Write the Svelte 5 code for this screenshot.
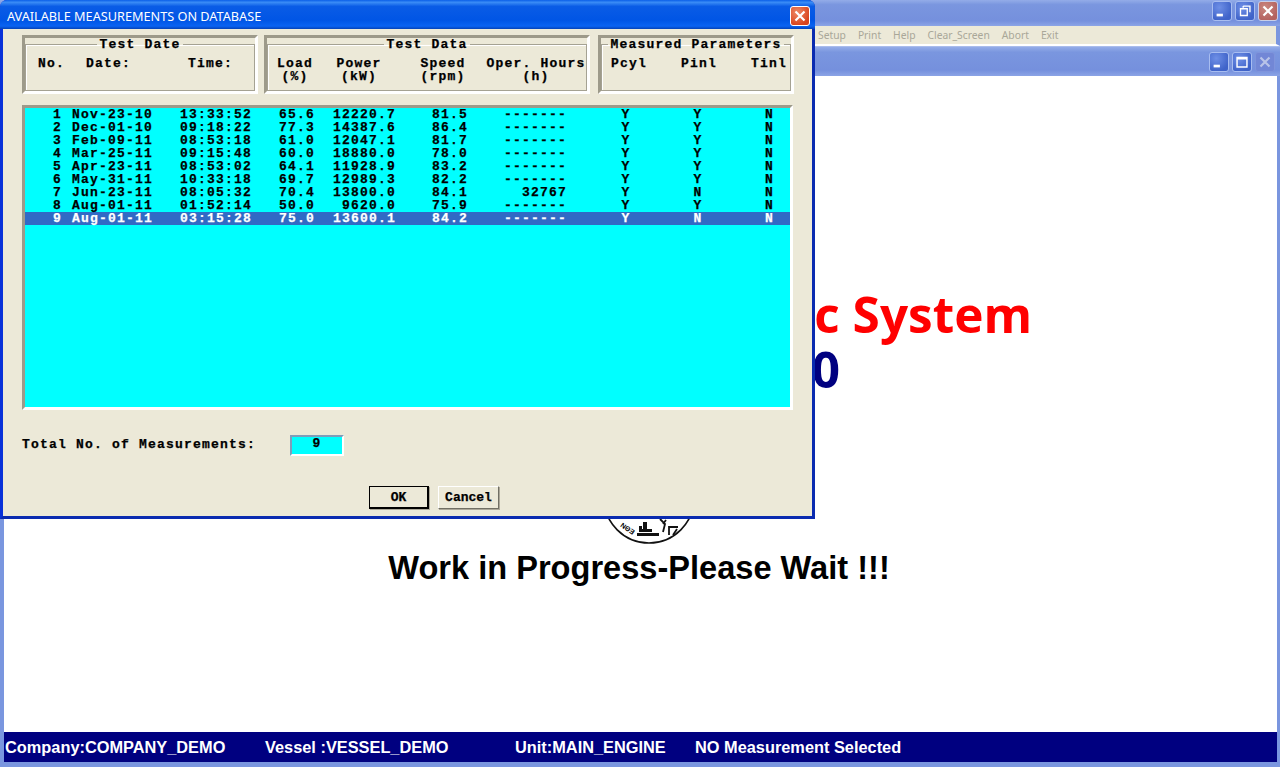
<script lang="ts">
    const rows = [
        ["1", "Nov-23-10", "13:33:52", "65.6", "12220.7", "81.5", "-------", "Y", "Y", "N"],
        ["2", "Dec-01-10", "09:18:22", "77.3", "14387.6", "86.4", "-------", "Y", "Y", "N"],
        ["3", "Feb-09-11", "08:53:18", "61.0", "12047.1", "81.7", "-------", "Y", "Y", "N"],
        ["4", "Mar-25-11", "09:15:48", "60.0", "18880.0", "78.0", "-------", "Y", "Y", "N"],
        ["5", "Apr-23-11", "08:53:02", "64.1", "11928.9", "83.2", "-------", "Y", "Y", "N"],
        ["6", "May-31-11", "10:33:18", "69.7", "12989.3", "82.2", "-------", "Y", "Y", "N"],
        ["7", "Jun-23-11", "08:05:32", "70.4", "13800.0", "84.1", "32767", "Y", "N", "N"],
        ["8", "Aug-01-11", "01:52:14", "50.0", "9620.0", "75.9", "-------", "Y", "Y", "N"],
        ["9", "Aug-01-11", "03:15:28", "75.0", "13600.1", "84.2", "-------", "Y", "N", "N"],
    ];
    const selected = 8;
    const menu = ["Setup", "Print", "Help", "Clear_Screen", "Abort", "Exit"];
</script>

<div class="desktop">
    <div class="app-title">
        <span class="win-btn"><svg viewBox="0 0 20 20"><rect x="4" y="13" width="7" height="3" fill="#fff" /></svg></span>
        <span class="win-btn"><svg viewBox="0 0 20 20"><path d="M8 4.5h7.5v7M8 4.5v2M5 7.5h7.5v7.5H5z" fill="none" stroke="#fff" stroke-width="1.5" /></svg></span>
        <span class="win-btn danger"><svg viewBox="0 0 20 20"><path d="M5 5l10 10M15 5L5 15" stroke="#fff" stroke-width="2.4" /></svg></span>
    </div>
    <nav class="menu">
        {#each menu as item}<span>{item}</span>{/each}
    </nav>
    <div class="child-title">
        <span class="win-btn"><svg viewBox="0 0 20 20"><rect x="4" y="13" width="7" height="3" fill="#fff" /></svg></span>
        <span class="win-btn"><svg viewBox="0 0 20 20"><path d="M4.5 5h11v10.5h-11z M4.5 6.5h11" fill="none" stroke="#fff" stroke-width="1.6" /></svg></span>
        <span class="win-btn muted"><svg viewBox="0 0 20 20"><path d="M5 5l10 10M15 5L5 15" stroke="#b9c4e8" stroke-width="2.4" /></svg></span>
    </div>

    <main class="client">
        <h1 class="product">Engine Diagnostic System</h1>
        <h2 class="version">Version 1.0</h2>
        <svg class="seal" viewBox="0 0 92 92" aria-hidden="true">
            <circle cx="46" cy="46" r="45" fill="#fff" stroke="#111" stroke-width="1.6" />
            <path d="M34 81h22v3H34zM36 77h13v3H36zM40 70h4v7h-4zM36 74h3v3h-3z" fill="#111" />
            <path d="M57 67l5 5-2 8M63 68l-3 4M66 83V75h9M70 83l4-6" fill="none" stroke="#111" stroke-width="1.8" />
            <text x="46" y="11" transform="rotate(215 46 46)" class="seal-text">ΕΘΝ</text>
        </svg>
        <h3 class="wait">Work in Progress-Please Wait !!!</h3>
    </main>

    <footer class="status">
        <span class="s-company">Company:COMPANY_DEMO</span>
        <span class="s-vessel">Vessel :VESSEL_DEMO</span>
        <span class="s-unit">Unit:MAIN_ENGINE</span>
        <span>NO Measurement Selected</span>
    </footer>

    <section class="dialog">
        <header class="dialog-title">
            <span>AVAILABLE MEASUREMENTS ON DATABASE</span>
            <span class="win-btn close"><svg viewBox="0 0 20 20"><path d="M5 5l10 10M15 5L5 15" stroke="#fff" stroke-width="2.4" /></svg></span>
        </header>
        <div class="dialog-body">
            <div class="groups">
                <div class="frame f-date">
                    <fieldset>
                        <legend>Test Date</legend>
                        <div class="heads heads-date">
                            <span>No.</span><span>Date:</span><span>Time:</span>
                        </div>
                    </fieldset>
                </div>
                <div class="frame f-data">
                    <fieldset>
                        <legend>Test Data</legend>
                        <div class="heads heads-data">
                            <span>Load<br />(%)</span>
                            <span>Power<br />(kW)</span>
                            <span>Speed<br />(rpm)</span>
                            <span>Oper. Hours<br />(h)</span>
                        </div>
                    </fieldset>
                </div>
                <div class="frame f-params">
                    <fieldset>
                        <legend>Measured Parameters</legend>
                        <div class="heads heads-params">
                            <span>Pcyl</span><span>Pinl</span><span>Tinl</span>
                        </div>
                    </fieldset>
                </div>
            </div>

            <div class="list">
                {#each rows as row, i}
                    <div class="row" class:selected={i === selected}>
                        {#each row as cell}<span>{cell}</span>{/each}
                    </div>
                {/each}
            </div>

            <div class="total">
                <span>Total No. of Measurements:</span>
                <output>9</output>
            </div>

            <div class="actions">
                <button class="default">OK</button>
                <button>Cancel</button>
            </div>
        </div>
    </section>
</div>

<style>
    :global(body) {
        margin: 0;
        background: #fff;
    }

    .desktop {
        position: relative;
        width: 1280px;
        height: 767px;
        overflow: hidden;
        display: flex;
        flex-direction: column;
        background: #7a96df;
        font-family: "Noto Sans", sans-serif;
    }

    .app-title,
    .child-title {
        display: flex;
        justify-content: flex-end;
        align-items: center;
        gap: 3px;
        flex: none;
        background: linear-gradient(#93ace8 0, #7a96df 18%, #7590dd 80%, #8ba4e6 100%);
    }

    .app-title {
        height: 26px;
        padding-right: 2px;
        padding-bottom: 4px;
        box-sizing: border-box;
    }

    .child-title {
        height: 30px;
        padding-right: 5px;
        box-sizing: border-box;
        border-top: 1px solid #a9bcec;
    }

    .win-btn {
        display: block;
        width: 20px;
        height: 20px;
        box-sizing: border-box;
        border: 1px solid #a8bdf0;
        border-radius: 3px;
        background: radial-gradient(circle at 35% 30%, #6e8fe6, #3f63c9 75%);
    }

    .win-btn svg {
        display: block;
        width: 18px;
        height: 18px;
    }

    .win-btn.danger {
        background: radial-gradient(circle at 35% 30%, #c9877f, #b4625f 75%);
        border-color: #c8cfe8;
    }

    .win-btn.muted {
        background: #7287d6;
        border-color: #7f94dc;
    }

    .menu {
        height: 18px;
        flex: none;
        display: flex;
        align-items: center;
        padding-left: 814px;
        gap: 12px;
        background: #ece9d8;
        border-bottom: 2px solid #fff;
        border-left: 4px solid #7a96df;
        border-right: 4px solid #7a96df;
        margin: 0;
        font-size: 10.3px;
        color: #a9a798;
    }

    .client {
        flex: 1;
        min-height: 0;
        margin: 0 3px 0 4px;
        background: #fff;
        display: flex;
        flex-direction: column;
        align-items: center;
        padding-top: 211px;
        overflow: hidden;
    }

    .product,
    .version {
        align-self: flex-end;
        margin: 0 245px 0 0;
        font-size: 49.5px;
        line-height: 54px;
        font-weight: 700;
        white-space: nowrap;
        color: #ff0000;
        font-family: "Open Sans", sans-serif;
    }

    .version {
        margin: 1px 437px 0 0;
        color: #000080;
    }

    .seal {
        width: 92px;
        height: 92px;
        flex: none;
        margin: 56px 0 0 17px;
    }

    .seal-text {
        font: 700 7px "Liberation Sans", sans-serif;
        text-anchor: middle;
    }

    .wait {
        margin: 5px 3px 0 0;
        font: 700 32.6px/38px "Liberation Sans", Arial, sans-serif;
        color: #000;
    }

    .status {
        flex: none;
        height: 30px;
        margin: 0 3px 5px 4px;
        padding-left: 1px;
        display: flex;
        align-items: center;
        background: #000080;
        color: #fff;
        font: 700 16.35px "Liberation Sans", Arial, sans-serif;
        white-space: nowrap;
    }

    .s-company {
        width: 260px;
    }

    .s-vessel {
        width: 250px;
    }

    .s-unit {
        width: 180px;
    }

    .dialog {
        position: absolute;
        left: 0;
        top: 0;
        width: 815px;
        height: 519px;
        box-sizing: border-box;
        display: flex;
        flex-direction: column;
        background: #0831d9;
        border: 3px solid #0831d9;
        border-top: 0;
        border-right-color: #0a2bb0;
        border-bottom-color: #0a2bb0;
        border-radius: 7px 7px 0 0;
    }

    .dialog-title {
        height: 29px;
        flex: none;
        display: flex;
        align-items: center;
        justify-content: space-between;
        box-sizing: border-box;
        color: #fff;
        font-size: 12.7px;
        background: linear-gradient(#0a5fe8 0, #3a8cf6 8%, #0a5ce6 22%, #0055e5 70%, #0a63f2 90%, #0442b8 100%);
        margin: 0 -3px;
        padding: 2px 5px 0 7px;
        border-radius: 7px 7px 0 0;
    }

    .win-btn.close {
        background: radial-gradient(circle at 35% 30%, #ee8a66, #d9431c 75%);
        border-color: #fff;
    }

    .dialog-body {
        flex: 1;
        background: #ece9d8;
        padding: 6px 0 0 19px;
        font: 700 13px/13px "Liberation Mono", monospace;
        letter-spacing: 1.2px;
        -webkit-text-stroke: 0.25px currentColor;
        color: #000;
    }

    .groups {
        display: flex;
    }

    .frame {
        height: 59px;
        box-sizing: border-box;
        display: flex;
        border: 3px solid;
        border-color: #9d9a8a #fff #fff #9d9a8a;
    }

    .f-date {
        width: 236px;
        margin-right: 6px;
    }

    .f-data {
        width: 326px;
        margin-right: 8px;
    }

    .f-params {
        width: 196px;
    }

    fieldset {
        flex: 1;
        min-width: 0;
        margin: 0;
        padding: 0;
        border: 1px solid #a5a293;
        box-shadow: inset 1px 1px 0 #fff;
    }

    legend {
        margin: 0 auto;
        padding: 0 2px;
    }

    .heads {
        display: grid;
        padding-top: 6px;
        white-space: nowrap;
    }

    .heads-date {
        grid-template-columns: 48px 102px 1fr;
        padding-left: 12px;
    }

    .heads-data {
        grid-template-columns: 54px 74px 90px 100px;
        text-align: center;
    }

    .heads-data span:nth-child(3) {
        padding-left: 4px;
    }

    .heads-params {
        grid-template-columns: 70px 70px 1fr;
        padding-left: 9px;
    }

    .list {
        width: 771px;
        height: 305px;
        margin-top: 11px;
        box-sizing: border-box;
        border: 3px solid;
        border-color: #9d9a8a #fff #fff #9d9a8a;
        background: #00ffff;
        overflow: hidden;
    }

    .row {
        height: 13px;
        display: grid;
        grid-template-columns: 37px 118px 99px 54px 99px 72px 63px 23px 72px 72px 1fr;
        white-space: pre;
    }

    .row span:nth-child(1),
    .row span:nth-child(7) {
        text-align: right;
    }

    .row span:nth-child(2) {
        padding-left: 10px;
    }

    .row span:nth-child(5) {
        text-align: right;
        padding-right: 36px;
    }

    .row span:nth-child(8) {
        grid-column: 9;
    }

    .row span:nth-child(8),
    .row span:nth-child(9) {
        text-align: center;
    }

    .row span:nth-child(10) {
        padding-left: 31px;
    }

    .row.selected {
        background: #316ac5;
        color: #fff;
    }

    .total {
        display: flex;
        align-items: center;
        margin-top: 25px;
        height: 21px;
    }

    .total span {
        width: 268px;
        margin-bottom: 3px;
    }

    output {
        width: 54px;
        height: 21px;
        box-sizing: border-box;
        display: block;
        text-align: center;
        line-height: 13px;
        background: #00ffff;
        border: 2px solid;
        border-color: #7f9db9 #fff #fff #7f9db9;
    }

    .actions {
        display: flex;
        gap: 9px;
        margin: 30px 0 0 347px;
    }

    button {
        width: 61px;
        height: 23px;
        padding: 0;
        background: #ece9d8;
        border: 1px solid;
        border-color: #fff #716f64 #716f64 #fff;
        box-shadow: 1px 1px 0 #aca899;
        font: inherit;
        color: #000;
    }

    button.default {
        width: 60px;
        border: 1px solid #000;
        border-right-width: 2px;
        border-bottom-width: 2px;
    }
</style>
